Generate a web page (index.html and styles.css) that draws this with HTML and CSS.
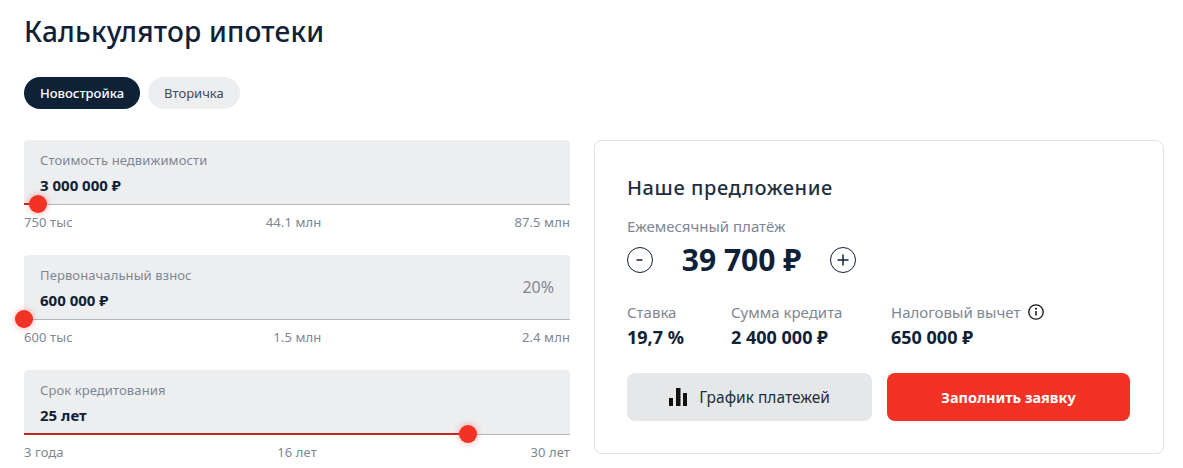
FILE: index.html
```html
<!doctype html>
<html lang="ru">
  <head>
    <meta charset="utf-8">
    <title>Калькулятор ипотеки</title>
    <link rel="stylesheet" href="styles.css">
  </head>
  <body>
    <div class="calc">
      <h1 class="title">Калькулятор ипотеки</h1>
      <div class="tabs">
        <button class="tab active">Новостройка</button>
        <button class="tab">Вторичка</button>
      </div>
      <div class="columns">
        <div class="fields">
          <div class="field">
            <div class="box">
              <div>
                <div class="label">Стоимость недвижимости</div>
                <div class="value">3 000 000 ₽</div>
              </div>
            </div>
            <div class="track">
              <div class="fill" style="width: 14px"></div>
              <div class="thumb" style="left: 14px"></div>
            </div>
            <div class="scale"><span>750 тыс</span><span>44.1 млн</span><span>87.5 млн</span></div>
          </div>
          <div class="field">
            <div class="box">
              <div>
                <div class="label">Первоначальный взнос</div>
                <div class="value">600 000 ₽</div>
              </div>
              <div class="percent">20%</div>
            </div>
            <div class="track">
              <div class="fill" style="width: 0"></div>
              <div class="thumb" style="left: 0"></div>
            </div>
            <div class="scale"><span>600 тыс</span><span>1.5 млн</span><span>2.4 млн</span></div>
          </div>
          <div class="field">
            <div class="box">
              <div>
                <div class="label">Срок кредитования</div>
                <div class="value">25 лет</div>
              </div>
            </div>
            <div class="track">
              <div class="fill" style="width: 444px"></div>
              <div class="thumb" style="left: 444px"></div>
            </div>
            <div class="scale"><span>3 года</span><span>16 лет</span><span>30 лет</span></div>
          </div>
        </div>
        <div class="offer">
          <h2 class="offer-title">Наше предложение</h2>
          <div class="label pay-label">Ежемесячный платёж</div>
          <div class="payment">
            <button class="round">
              <svg width="26" height="26" viewBox="0 0 26 26"><circle cx="13" cy="13" r="12.5" fill="none" stroke="#0f2137"/><path d="M9.5 13h6" stroke="#0f2137" stroke-width="1.5"/></svg>
            </button>
            <div class="amount">39 700 ₽</div>
            <button class="round">
              <svg width="26" height="26" viewBox="0 0 26 26"><circle cx="13" cy="13" r="12.5" fill="none" stroke="#0f2137"/><path d="M7.5 13h11M13 7.5v11" stroke="#0f2137" stroke-width="1.5"/></svg>
            </button>
          </div>
          <div class="stats">
            <div class="stat stat-rate">
              <div class="label">Ставка</div>
              <div class="stat-value">19,7 %</div>
            </div>
            <div class="stat stat-sum">
              <div class="label">Сумма кредита</div>
              <div class="stat-value">2 400 000 ₽</div>
            </div>
            <div class="stat">
              <div class="label">Налоговый вычет
                <svg class="info" width="16" height="16" viewBox="0 0 16 16"><circle cx="8" cy="8" r="7.2" fill="none" stroke="#111" stroke-width="1.3"/><circle cx="8" cy="4.8" r="1" fill="#111"/><path d="M8 7v4.6" stroke="#111" stroke-width="1.5"/></svg>
              </div>
              <div class="stat-value">650 000 ₽</div>
            </div>
          </div>
          <div class="actions">
            <button class="btn btn-grey">
              <svg width="18" height="18" viewBox="0 0 18 18"><path d="M0 10h4v8H0zM7 0h4.5v18H7zM14 5h4v13h-4z" fill="#111"/></svg>
              График платежей
            </button>
            <button class="btn btn-red">Заполнить заявку</button>
          </div>
        </div>
      </div>
    </div>
  </body>
</html>
```

FILE: styles.css
```css
* { box-sizing: border-box; }
body { margin: 0; background: #fff; color: #0f2137; font-family: "Noto Sans", "Open Sans", sans-serif; overflow: hidden; }
button { font-family: inherit; border: 0; cursor: pointer; }
.calc { padding: 11px 19px 0 24px; }
.title { margin: 0; font-size: 28px; line-height: 40px; font-weight: 500; letter-spacing: 0.2px; }
.tabs { display: flex; gap: 8px; margin-top: 26px; }
.tab { height: 32px; padding: 0 16px; border-radius: 16px; background: #edeef0; color: #3a4a5c; font-size: 13px; }
.tab.active { background: #0f2137; color: #fff; font-weight: 500; }
.columns { display: flex; gap: 24px; margin-top: 31px; }
.fields { width: 546px; flex: none; display: flex; flex-direction: column; gap: 23px; }
.box { height: 64px; padding: 10px 16px 0; display: flex; justify-content: space-between; align-items: center; background: #edeef0; border-radius: 4px 4px 0 0; }
.box > div:first-child { align-self: flex-start; }
.label { font-size: 13px; line-height: 20px; letter-spacing: 0.1px; color: #7d8794; }
.value { margin-top: 5px; font-size: 15px; line-height: 20px; font-weight: 700; color: #0f2137; }
.percent { font-size: 16px; color: #7d8794; margin-top: -10px; }
.track { position: relative; height: 1px; background: #b4b8bd; }
.fill { height: 2px; position: absolute; top: -1px; left: 0; background: #c4281c; }
.thumb { position: absolute; top: -9px; width: 18px; height: 18px; margin-left: -9px; border-radius: 50%; background: #f23224; box-shadow: 0 0 6px rgba(242, 50, 36, 0.45); }
.scale { display: flex; justify-content: space-between; margin-top: 7px; font-size: 13px; line-height: 20px; letter-spacing: 0.1px; color: #7d8794; }
.offer { flex: 1; height: 314px; padding: 33px 33px 0 32px; border: 1px solid #dfe1e4; border-radius: 8px; }
.offer-title { margin: 0; font-size: 20px; line-height: 28px; font-weight: 500; letter-spacing: 0.6px; color: #1e2f42; }
.pay-label { margin-top: 14px; font-size: 15px; letter-spacing: 0; }
.payment { display: flex; align-items: center; margin-top: 4px; }
.round { width: 26px; height: 26px; padding: 0; background: none; display: block; }
.round svg { display: block; }
.amount { width: 177px; text-align: center; font-size: 30px; line-height: 40px; font-weight: 700; }
.stats { display: flex; margin-top: 22px; }
.stat .label { font-size: 15px; letter-spacing: 0; display: flex; align-items: center; gap: 8px; }
.stat-rate { width: 104px; }
.stat-sum { width: 160px; }
.stat-value { margin-top: 3px; font-size: 18px; line-height: 24px; font-weight: 700; }
.actions { display: flex; gap: 15px; margin-top: 24px; }
.btn { height: 48px; border-radius: 8px; font-size: 15.5px; display: flex; align-items: center; justify-content: center; gap: 12px; }
.btn-grey { width: 245px; background: #e5e7e9; color: #1e2f42; }
.btn-red { width: 243px; background: #f23224; color: #fff; font-size: 14.5px; font-weight: 700; }
```
